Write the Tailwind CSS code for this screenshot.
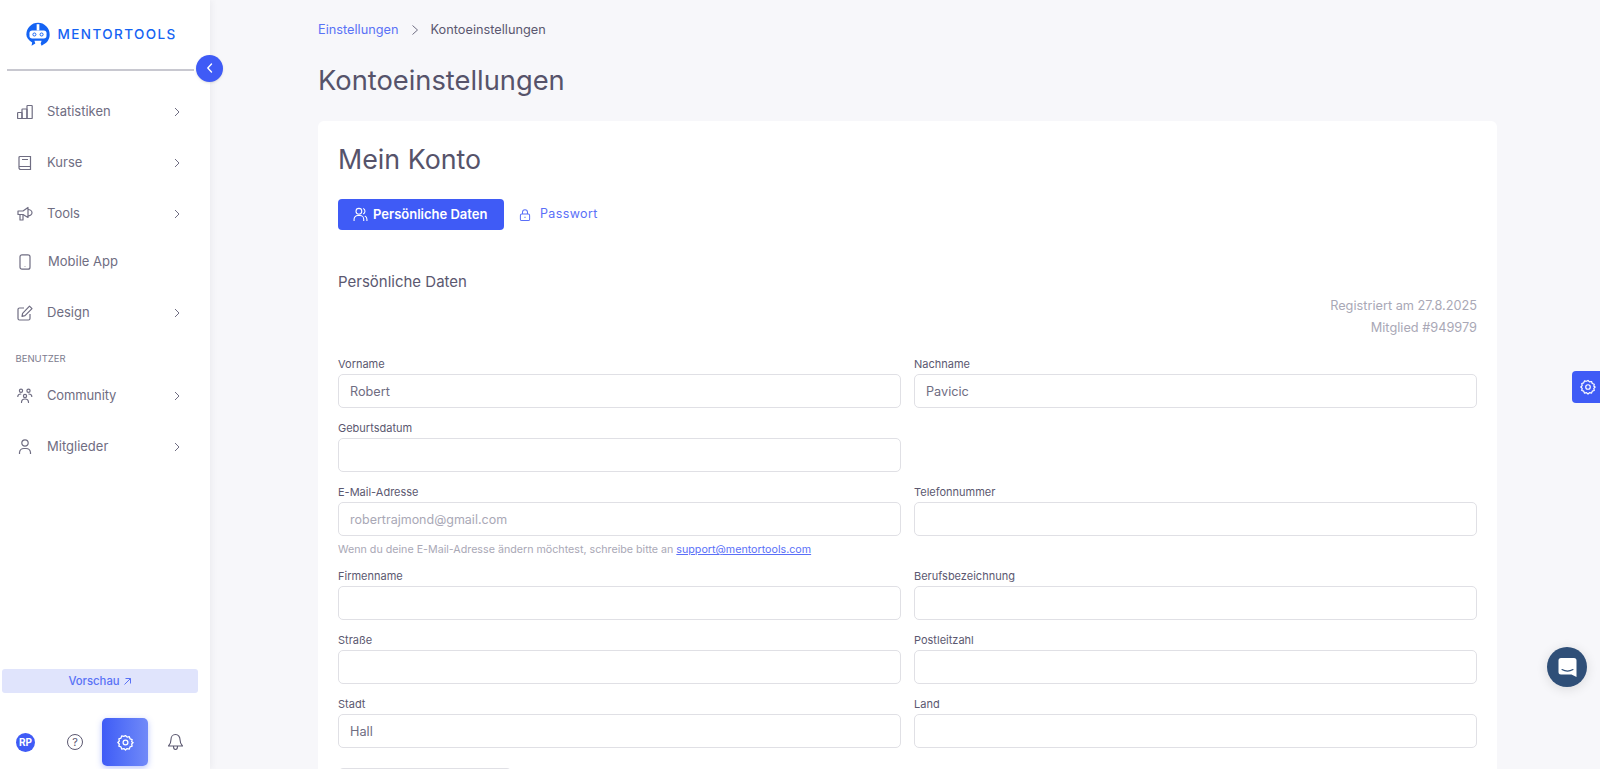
<!DOCTYPE html>
<html lang="de">
<head>
<meta charset="utf-8">
<script src="https://cdn.jsdelivr.net/npm/@tailwindcss/browser@4"></script>
<title>Kontoeinstellungen</title>
</head>
<body class="m-0 bg-[#f7f7fa] font-['Inter','Liberation_Sans',sans-serif] text-[#5b5870]">
<div class="relative flex h-[769px] w-[1600px] overflow-hidden">
  <aside class="relative z-10 flex h-full w-[210px] shrink-0 flex-col bg-white shadow-[2px_0_6px_rgba(60,60,90,0.06)]">
    <div class="flex h-[69px] items-center pl-[24.5px]">
      <svg width="26" height="27" viewBox="0 0 29 29" class="shrink-0">
        <path d="M14.500 1.500a13 13 0 0 1 13 13c0 5-2.600 9-6.500 11l-2.500 1.500-1-2.500 1-3h-8l1 3-4.200 2.500.7-3.500C4 21 1.500 18 1.500 14.500a13 13 0 0 1 13-13z" fill="#1463f3"/>
        <path d="M8 10h13a3 3 0 0 1 3 3v3a3 3 0 0 1-3 3H8a3 3 0 0 1-3-3v-3a3 3 0 0 1 3-3z" fill="#fff"/>
        <circle cx="10.500" cy="14.500" r="1.700" fill="none" stroke="#1463f3" stroke-width="1.100"/>
        <circle cx="18.500" cy="14.500" r="1.700" fill="none" stroke="#1463f3" stroke-width="1.100"/>
        <rect x="13" y="3" width="3" height="7" fill="#fff"/>
      </svg>
      <span class="ml-[7px] text-[13.5px] font-medium tracking-[0.105em] text-[#1463f3]">MENTORTOOLS</span>
    </div>
    <div class="mx-[7px] h-[1.500px] w-[187px] bg-[#c8c8d0]"></div>
    <button class="absolute left-[196px] top-[54.500px] flex h-[27px] w-[27px] items-center justify-center rounded-full bg-[#3f5bf6] shadow-sm">
      <svg width="12" height="12" viewBox="0 0 12 12" fill="none" stroke="#fff" stroke-width="1.400" stroke-linecap="round" stroke-linejoin="round"><path d="M7.500 2 3.800 6l3.700 4"/></svg>
    </button>

    <nav class="mt-[15.500px] flex flex-col text-[13px] text-[#6f6d82]">
      <a class="flex h-[51px] items-center pl-[17px] pr-[29px]">
        <svg class="w-[16px] h-[16px]" viewBox="0 0 16 16" fill="none" stroke="#6f6d82" stroke-width="1.200"><rect x=".6" y="8.500" width="4.400" height="6" rx=".6"/><rect x="5" y="5" width="5" height="9.500" rx=".6"/><rect x="10" y="1.500" width="5.200" height="13" rx=".6"/></svg>
        <span class="ml-[14px] flex-1">Statistiken</span>
        <svg width="8" height="10" viewBox="0 0 8 10" fill="none" stroke="#6f6d82" stroke-width="1"><path d="m2 1 4 4-4 4"/></svg>
      </a>
      <a class="flex h-[51px] items-center pl-[17px] pr-[29px]">
        <svg class="w-[16px] h-[16px]" viewBox="0 0 16 16" fill="none" stroke="#6f6d82" stroke-width="1.200"><path d="M3 1.500h10.500v13H3.700A1.700 1.700 0 0 1 2 12.800V2.500a1 1 0 0 1 1-1z"/><path d="M2 11.500h11.500M5 4.500h6"/></svg>
        <span class="ml-[14px] flex-1">Kurse</span>
        <svg width="8" height="10" viewBox="0 0 8 10" fill="none" stroke="#6f6d82" stroke-width="1"><path d="m2 1 4 4-4 4"/></svg>
      </a>
      <a class="flex h-[51px] items-center pl-[17px] pr-[29px]">
        <svg class="w-[16px] h-[16px]" viewBox="0 0 16 16" fill="none" stroke="#6f6d82" stroke-width="1.200" stroke-linejoin="round"><path d="M1 5h5l5-3.500v10L6 8.500H1z"/><path d="M3 8.500v5.500h3V8.500M11 3.500c2 0 4 1.500 4 3.300s-2 3-4 3"/></svg>
        <span class="ml-[14px] flex-1">Tools</span>
        <svg width="8" height="10" viewBox="0 0 8 10" fill="none" stroke="#6f6d82" stroke-width="1"><path d="m2 1 4 4-4 4"/></svg>
      </a>
      <a class="mb-[3px] flex h-[45px] items-center pl-[17px] pr-[29px]">
        <svg class="w-[16px] h-[16px]" viewBox="0 0 16 16" fill="none" stroke="#6f6d82" stroke-width="1.200"><rect x="3" y="0.800" width="10" height="14.400" rx="2"/><path d="M8 12.600v.3"/></svg>
        <span class="ml-[15px] flex-1">Mobile App</span>
      </a>
      <a class="flex h-[51px] items-center pl-[17px] pr-[29px]">
        <svg class="w-[16px] h-[16px]" viewBox="0 0 16 16" fill="none" stroke="#6f6d82" stroke-width="1.200" stroke-linejoin="round"><path d="M7 3H2.500A1.500 1.500 0 0 0 1 4.500v9A1.500 1.500 0 0 0 2.500 15h9a1.500 1.500 0 0 0 1.500-1.500V9"/><path d="M12.500 1.200 15 3.700 8 10.700l-3 .6.600-3z"/></svg>
        <span class="ml-[14px] flex-1">Design</span>
        <svg width="8" height="10" viewBox="0 0 8 10" fill="none" stroke="#6f6d82" stroke-width="1"><path d="m2 1 4 4-4 4"/></svg>
      </a>
      <div class="mt-[12.500px] mb-[4px] h-[16px] pl-[15.500px] text-[9.500px] leading-[16px] text-[#7d7b8e]">BENUTZER</div>
      <a class="flex h-[51px] items-center pl-[17px] pr-[29px]">
        <svg class="w-[16px] h-[16px]" viewBox="0 0 16 16" fill="none" stroke="#6f6d82" stroke-width="1.200" stroke-linecap="round"><circle cx="4" cy="2.800" r="1.600"/><circle cx="11.500" cy="2.800" r="1.600"/><circle cx="8" cy="8" r="1.600"/><path d="M.8 8.500c0-1.500 1.200-2.500 3-2.500M14.800 8.500c0-1.500-1.200-2.500-3-2.500M4.500 14.500c0-2 1.500-3.500 3.500-3.500s3.500 1.500 3.500 3.500"/></svg>
        <span class="ml-[14px] flex-1 tracking-[-0.01em]">Community</span>
        <svg width="8" height="10" viewBox="0 0 8 10" fill="none" stroke="#6f6d82" stroke-width="1"><path d="m2 1 4 4-4 4"/></svg>
      </a>
      <a class="flex h-[51px] items-center pl-[17px] pr-[29px]">
        <svg class="w-[16px] h-[16px]" viewBox="0 0 16 16" fill="none" stroke="#6f6d82" stroke-width="1.200"><circle cx="8" cy="4" r="3.200"/><path d="M2.500 15v-1.500a4.500 4.500 0 0 1 4.500-4h2a4.500 4.500 0 0 1 4.500 4V15"/></svg>
        <span class="ml-[14px] flex-1">Mitglieder</span>
        <svg width="8" height="10" viewBox="0 0 8 10" fill="none" stroke="#6f6d82" stroke-width="1"><path d="m2 1 4 4-4 4"/></svg>
      </a>
    </nav>

    <div class="mt-auto px-[2px]">
      <a class="flex h-[24px] w-[196px] items-center justify-center gap-[3px] rounded-[3px] bg-[#e0e4fc] text-[11.300px] font-medium text-[#5a72f6]">Vorschau
        <svg width="9" height="9" viewBox="0 0 9 9" fill="none" stroke="#5a72f6" stroke-width="1"><path d="M1.500 7.500 7.500 1.500M2.500 1.500h5v5"/></svg>
      </a>
    </div>
    <div class="mt-[25px] mb-[3px] flex h-[48px] items-center">
      <div class="ml-[16px] flex h-[19px] w-[19px] items-center justify-center rounded-full bg-[#3f5bf6] text-[10px] font-bold text-white">RP</div>
      <div class="ml-[32px] flex h-[16px] w-[16px] items-center justify-center rounded-full border-[1.200px] border-[#5b5870] text-[11px] leading-none text-[#5b5870]">?</div>
      <div class="ml-[19px] flex h-[48px] w-[46px] items-center justify-center rounded-[5px] bg-gradient-to-r from-[#3f5bf6] to-[#7189f8] shadow-[0_2px_6px_rgba(63,91,246,0.35)]">
        <svg width="17" height="17" viewBox="0 0 24 24" fill="none" stroke="#fff" stroke-width="1.800" stroke-linejoin="round"><circle cx="12" cy="12" r="3.400"/><path d="M12 2.200l2.300 2.200 3.100-.6 1 3 3 1-.7 3.100L22.800 12l-2.100 2.100.7 3.100-3 1-1 3-3.100-.7L12 22.600l-2.300-2.100-3.100.7-1-3-3-1 .7-3.100L1.200 12l2.100-2.100-.7-3.100 3-1 1-3 3.100.6z"/></svg>
      </div>
      <svg class="ml-[19px]" width="17" height="18" viewBox="0 0 17 18" fill="none" stroke="#5b5870" stroke-width="1.100" stroke-linejoin="round"><path d="M8.500 1.500c-3 0-4.500 2.500-4.500 5 0 3.500-1 5-2.500 6.500h14C14 11.500 13 10 13 6.500c0-2.500-1.500-5-4.500-5zM6.500 13.500c0 2 1 3 2 3s2-1 2-3"/></svg>
    </div>
  </aside>

  <main class="flex-1 pl-[108px] pr-[103px]">
    <div class="flex h-[59px] items-center pt-[1px] text-[12.750px]">
      <span class="text-[#5a72f6]">Einstellungen</span>
      <svg class="mx-[11px]" width="10" height="12" viewBox="0 0 10 12" fill="none" stroke="#6f6d82" stroke-width="1"><path d="m2.500 1.500 5 4.500-5 4.500"/></svg>
      <span>Kontoeinstellungen</span>
    </div>
    <h1 class="m-0 h-[62px] text-[27.300px] leading-[43px] font-normal text-[#56536a]">Kontoeinstellungen</h1>
    <section class="h-[660px] rounded-t-[6px] bg-white px-[20px]">
      <h2 class="m-0 h-[77.500px] pt-[18px] text-[26.800px] leading-[40px] font-normal text-[#56536a]">Mein Konto</h2>
      <div class="flex h-[31.500px] items-center">
        <button class="flex h-[31.500px] w-[166px] items-center gap-[5px] rounded-[4px] bg-[#3f5bf6] pl-[15px] text-[13px] font-semibold text-white">
          <svg width="15" height="15" viewBox="0 0 14 14" fill="none" stroke="#fff" stroke-width="1"><circle cx="5.500" cy="4" r="2.700"/><path d="M1 13v-1.500A3.500 3.500 0 0 1 4.500 8h2A3.500 3.500 0 0 1 10 11.500V13M9.500 1.500a2.700 2.700 0 0 1 0 5M11 8.500c1.300.5 2 1.700 2 3V13"/></svg>
          Persönliche Daten
        </button>
        <span class="ml-[15px] flex items-center pt-[1px] text-[12.500px] text-[#5a6ff8]">
          <svg width="12" height="14" viewBox="0 0 13 14" fill="none" stroke="#5a6ff8" stroke-width="1.100"><rect x="1.500" y="6" width="10" height="7" rx="1.500"/><path d="M3.800 6V4a2.700 2.700 0 0 1 5.400 0v2"/><path d="M6.500 9v1.200"/></svg>
          <span class="ml-[9px] tracking-[0.03em]">Passwort</span>
        </span>
      </div>
      <h3 class="mt-[40.700px] text-[15px] leading-[22px] font-normal text-[#5b5870]">Persönliche Daten</h3>
      <div class="mt-[2.300px] text-right text-[12.750px] leading-[22.300px] text-[#a9a8b6]">
        <div>Registriert am 27.8.2025</div>
        <div>Mitglied #949979</div>
      </div>
      <div class="mt-[14.400px] grid grid-cols-2 gap-x-[13px] gap-y-[9.500px] text-[11px] leading-[20px] text-[#5b5870]">
        <div><label class="block h-[20px]">Vorname</label><div class="flex h-[34.500px] items-center rounded-[5px] border border-[#e0e0e5] px-[11px] pt-[1px] text-[12.700px] text-[#6f6d82]">Robert</div></div>
        <div><label class="block h-[20px]">Nachname</label><div class="flex h-[34.500px] items-center rounded-[5px] border border-[#e0e0e5] px-[11px] pt-[1px] text-[12.700px] text-[#6f6d82]">Pavicic</div></div>
        <div><label class="block h-[20px]">Geburtsdatum</label><div class="h-[34.500px] rounded-[5px] border border-[#e0e0e5]"></div></div>
        <div></div>
        <div><label class="block h-[20px]">E-Mail-Adresse</label><div class="flex h-[34.500px] items-center rounded-[5px] border border-[#e0e0e5] px-[11px] pt-[1px] text-[12.500px] text-[#a9a8b6]">robertrajmond@gmail.com</div>
          <p class="m-0 h-[20px] text-[10.700px] leading-[27px] text-[#a9a8b6]">Wenn du deine E-Mail-Adresse ändern möchtest, schreibe bitte an <a class="text-[#5a6ff8] underline">support@mentortools.com</a></p></div>
        <div><label class="block h-[20px]">Telefonnummer</label><div class="h-[34.500px] rounded-[5px] border border-[#e0e0e5]"></div></div>
        <div><label class="block h-[20px]">Firmenname</label><div class="h-[34.500px] rounded-[5px] border border-[#e0e0e5]"></div></div>
        <div><label class="block h-[20px]">Berufsbezeichnung</label><div class="h-[34.500px] rounded-[5px] border border-[#e0e0e5]"></div></div>
        <div><label class="block h-[20px]">Straße</label><div class="h-[34.500px] rounded-[5px] border border-[#e0e0e5]"></div></div>
        <div><label class="block h-[20px]">Postleitzahl</label><div class="h-[34.500px] rounded-[5px] border border-[#e0e0e5]"></div></div>
        <div><label class="block h-[20px]">Stadt</label><div class="flex h-[34.500px] items-center rounded-[5px] border border-[#e0e0e5] px-[11px] pt-[1px] text-[12.700px] text-[#6f6d82]">Hall</div></div>
        <div><label class="block h-[20px]">Land</label><div class="h-[34.500px] rounded-[5px] border border-[#e0e0e5]"></div></div>
      </div>
      <div class="mt-[20px] h-[34px] w-[174px] rounded-[5px] border border-[#e0e0e5]"></div>
    </section>
  </main>

  <div class="absolute right-0 top-[371px] flex h-[32px] w-[28px] items-center justify-center rounded-l-[4px] bg-[#3f5bf6] pl-[4px]">
    <svg width="16" height="16" viewBox="0 0 24 24" fill="none" stroke="#fff" stroke-width="1.800" stroke-linejoin="round"><circle cx="12" cy="12" r="3.400"/><path d="M12 2.200l2.300 2.200 3.100-.6 1 3 3 1-.7 3.100L22.800 12l-2.100 2.100.7 3.100-3 1-1 3-3.100-.7L12 22.600l-2.300-2.100-3.100.7-1-3-3-1 .7-3.100L1.200 12l2.100-2.100-.7-3.100 3-1 1-3 3.100.6z"/></svg>
  </div>
  <div class="absolute left-[1547px] top-[647px] flex h-[40px] w-[40px] items-center justify-center rounded-full bg-[#2f4f78] shadow-[0_2px_12px_rgba(0,0,0,0.12)]">
    <svg width="19" height="21" viewBox="0 0 19 21"><path d="M3 1h13a2.500 2.500 0 0 1 2.500 2.500V20l-5-2.500H3A2.500 2.500 0 0 1 .5 15V3.500A2.500 2.500 0 0 1 3 1z" fill="#fff"/><path d="M4 12.500c3.500 2 7.500 2 11 0" fill="none" stroke="#2f4f78" stroke-width="1.100" stroke-linecap="round"/></svg>
  </div>
</div>
</body>
</html>
